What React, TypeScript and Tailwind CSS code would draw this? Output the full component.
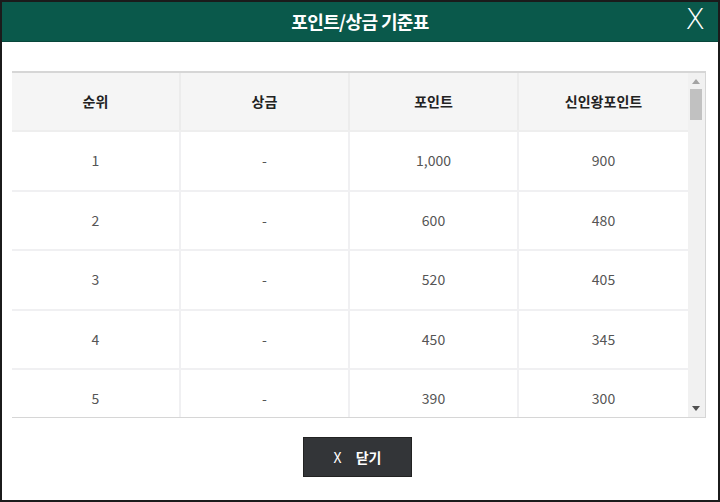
import React from "react";

const rows = [
  { rank: "1", prize: "-", point: "1,000", rookie: "900" },
  { rank: "2", prize: "-", point: "600", rookie: "480" },
  { rank: "3", prize: "-", point: "520", rookie: "405" },
  { rank: "4", prize: "-", point: "450", rookie: "345" },
  { rank: "5", prize: "-", point: "390", rookie: "300" },
];

const font = { fontFamily: '"Malgun Gothic", "Noto Sans CJK KR", "Noto Sans", sans-serif' };

const App: React.FC = () => {
  return (
    <div
      className="w-[720px] h-[502px] border-2 border-[#1b1b1b] bg-white flex flex-col overflow-hidden"
      style={font}
    >
      <header className="h-[40px] bg-[#0a594b] border-b border-[#08463b] flex items-center justify-center relative shrink-0">
        <h1 className="text-white text-[18px] font-bold tracking-[-0.6px]">포인트/상금 기준표</h1>
        <button
          className="absolute right-[13px] top-[3px] text-white text-[29px] leading-none font-light"
          style={{ fontFamily: '"DejaVu Sans", sans-serif', fontWeight: 200 }}
        >
          X
        </button>
      </header>

      <div className="pt-[29px] pl-[10px] pr-[12px]">
        <div className="h-[347px] border border-[#d6d6d6] border-l-0 border-t-2 flex overflow-hidden">
          <div className="flex-1 flex flex-col">
            <div className="grid grid-cols-4 h-[59px] bg-[#f5f5f5] border-b-2 border-[#eeeeee] shrink-0">
              {["순위", "상금", "포인트", "신인왕포인트"].map((h, i) => (
                <div
                  key={h}
                  className={`flex items-center justify-center text-[14px] font-bold text-[#222] ${i < 3 ? "border-r-2 border-[#ececec]" : ""}`}
                >
                  {h}
                </div>
              ))}
            </div>
            {rows.map((r) => (
              <div key={r.rank} className="grid grid-cols-4 h-[59.5px] border-b-2 border-[#f0f0f2] shrink-0">
                {[r.rank, r.prize, r.point, r.rookie].map((v, i) => (
                  <div
                    key={i}
                    className={`flex items-center justify-center text-[14px] text-[#555] ${i < 3 ? "border-r-2 border-[#f0f0f2]" : ""}`}
                  >
                    {v}
                  </div>
                ))}
              </div>
            ))}
          </div>
          <div className="w-[17px] bg-[#f1f1f1] relative shrink-0">
            <svg className="absolute top-[6px] left-[4px]" width="8" height="5" viewBox="0 0 8 5">
              <path d="M4 0 L8 5 L0 5 Z" fill="#a3a3a3" />
            </svg>
            <div className="absolute top-[16px] left-[2px] w-[12px] h-[31px] bg-[#c1c1c1]" />
            <svg className="absolute bottom-[6px] left-[4px]" width="8" height="5" viewBox="0 0 8 5">
              <path d="M0 0 L8 0 L4 5 Z" fill="#505050" />
            </svg>
          </div>
        </div>
      </div>

      <div className="flex justify-center pt-[19px] pr-[5px]">
        <button className="w-[109px] h-[40px] bg-[#333538] border border-[#222] text-white text-[14px] flex items-center justify-center gap-[14px]">
          <span>X</span>
          <span className="font-bold">닫기</span>
        </button>
      </div>
    </div>
  );
};

export default App;
